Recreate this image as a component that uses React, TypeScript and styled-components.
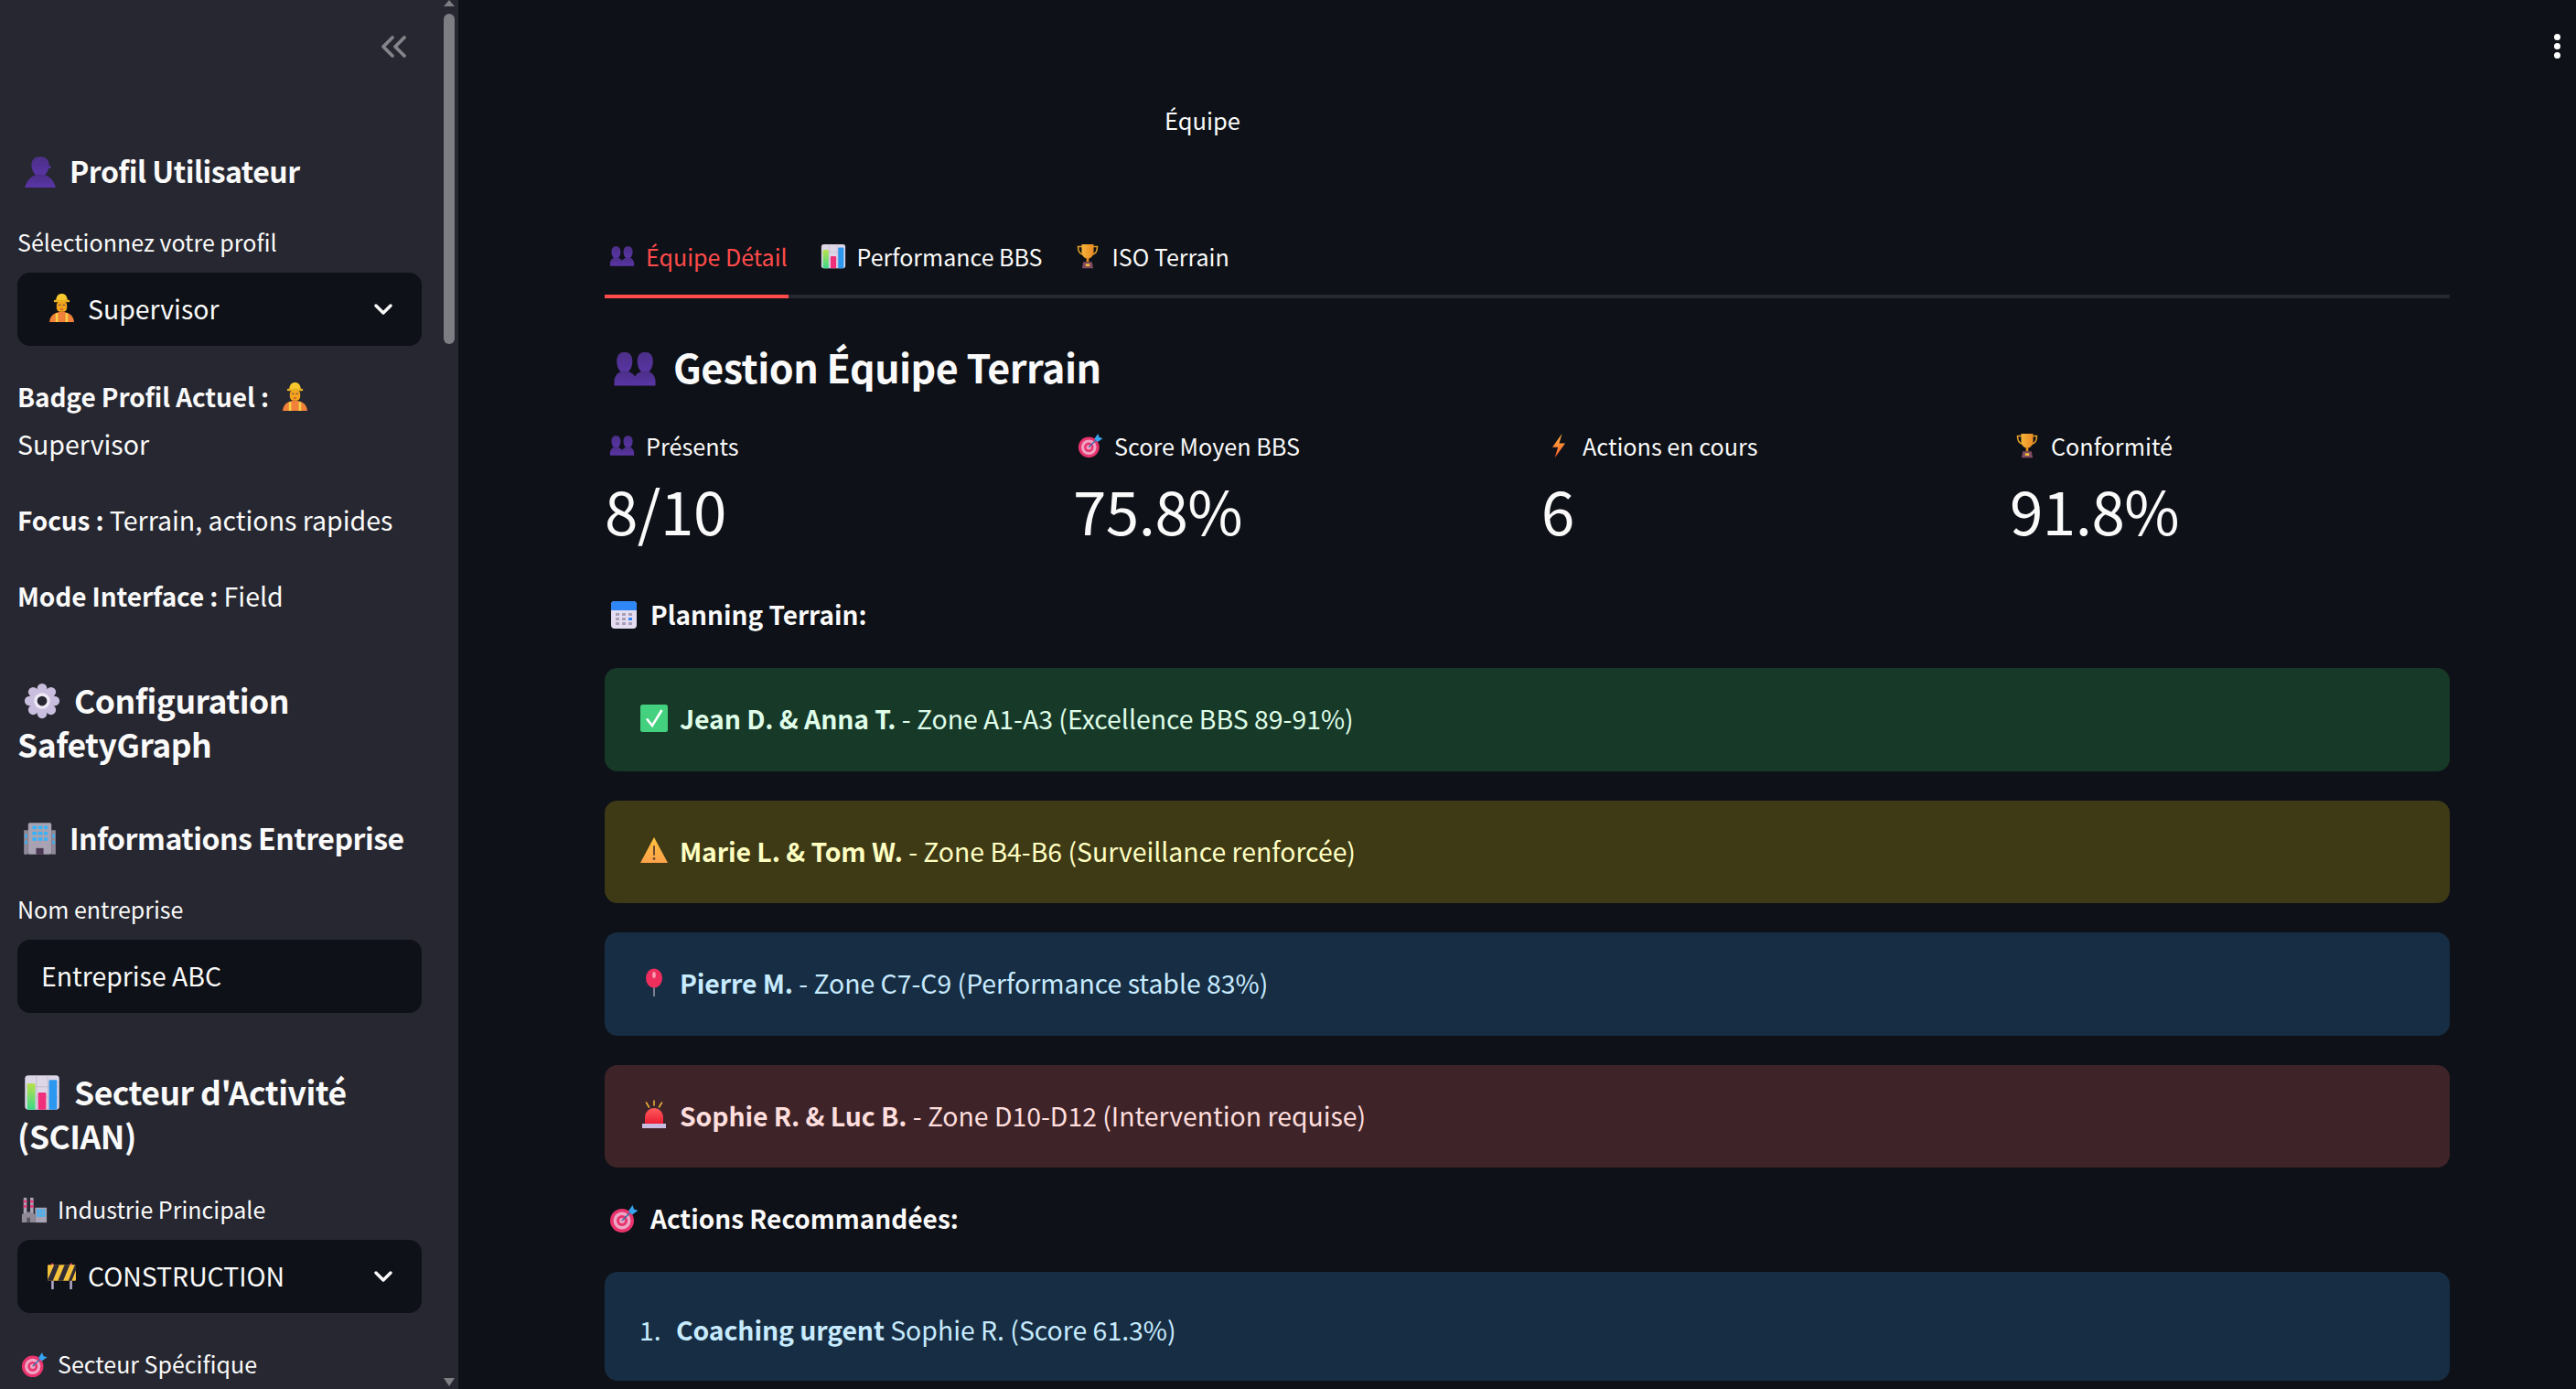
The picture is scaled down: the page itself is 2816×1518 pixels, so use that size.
import React from 'react'
import styled, { createGlobalStyle } from 'styled-components'

const GlobalStyle = createGlobalStyle`
  html, body {
    margin: 0;
    height: 100%;
    overflow: hidden;
    background: #0e1117;
  }
  body {
    font-family: "Noto Sans CJK SC", "Noto Sans", sans-serif;
    color: #fafafa;
  }
  * {
    box-sizing: border-box;
  }
`

type EmojiName =
  | 'person' | 'people' | 'worker' | 'gear' | 'office' | 'chart' | 'factory' | 'barrier'
  | 'target' | 'trophy' | 'zap' | 'calendar' | 'check' | 'warning' | 'pin' | 'siren'

const shapes: Record<EmojiName, React.ReactNode> = {
  person: (
    <g fill="url(#purple)">
      <path d="M7.500 9c0-5 3-8 8.500-8s8.500 3 8.500 8c0 6-3.500 11-8.500 11S7.500 15 7.500 9z" />
      <circle cx="25" cy="11" r="1.500" />
      <path d="M16 18c-7 0-13 5-15 13h30c-2-8-8-13-15-13z" />
    </g>
  ),
  people: (
    <g fill="url(#purple)">
      <path d="M2.800 10.500C2.800 6 5 3.800 8.500 3.800s5.700 2.200 5.700 6.700-2.200 8.500-5.700 8.500-5.700-4-5.700-8.500z" />
      <path d="M17.800 10.500c0-4.500 2.200-6.700 5.700-6.700s5.700 2.200 5.700 6.700-2.200 8.500-5.700 8.500-5.700-4-5.700-8.500z" />
      <path d="M8.500 17.500c-4 0-7 3-7.500 7v3.800h15.500l.5-3.800c-.5-4-4.500-7-8.500-7z" />
      <path d="M23.500 17.500c-4 0-8 3-8.500 7l.5 3.800H31v-3.800c-.5-4-3.500-7-7.500-7z" />
    </g>
  ),
  worker: (
    <>
      <path d="M3 31c0-6 5-11 13-11s13 5 13 11z" fill="#f0803a" />
      <path d="M9.500 21.500H12V31H9.500zM20 21.500h2.500V31H20z" fill="#f6d044" />
      <rect x="10.500" y="9" width="11" height="11" rx="4" fill="#f5a31c" />
      <path d="M12.500 13H15M17 13h2.500" stroke="#7a5a50" strokeWidth="1.300" />
      <path d="M14.500 17.500h3" stroke="#b03a3a" strokeWidth="1" />
      <path d="M10 8c0-4.500 2.500-7 6-7s6 2.500 6 7z" fill="#f7c92e" />
      <rect x="7.500" y="7.500" width="17" height="2.400" rx="1.200" fill="#e9b020" />
    </>
  ),
  gear: (
    <>
      <g fill="#c9bedd">
        <circle cx="16" cy="5" r="4.300" />
        <circle cx="16" cy="27" r="4.300" />
        <circle cx="5" cy="16" r="4.300" />
        <circle cx="27" cy="16" r="4.300" />
        <circle cx="8.200" cy="8.200" r="4.300" />
        <circle cx="23.800" cy="8.200" r="4.300" />
        <circle cx="8.200" cy="23.800" r="4.300" />
        <circle cx="23.800" cy="23.800" r="4.300" />
        <circle cx="16" cy="16" r="11" />
      </g>
      <circle cx="16" cy="16" r="7" fill="#efeaf5" />
      <circle cx="16" cy="16" r="4.300" fill="#262730" />
    </>
  ),
  office: (
    <>
      <path d="M1 8h4v23H1zM27 8h4v23h-4z" fill="#8f8a9a" />
      <rect x="5" y="1" width="22" height="30" rx="1.500" fill="#a8a2b2" />
      <g fill="#35b4fb">
        <rect x="9" y="4" width="4" height="3" />
        <rect x="14.500" y="4" width="4" height="3" />
        <rect x="20" y="4" width="3.500" height="3" />
        <rect x="9" y="9.500" width="4" height="3" />
        <rect x="14.500" y="9.500" width="4" height="3" />
        <rect x="20" y="9.500" width="3.500" height="3" />
        <rect x="9" y="15" width="4" height="3" />
        <rect x="14.500" y="15" width="4" height="3" />
        <rect x="20" y="15" width="3.500" height="3" />
        <rect x="2" y="12" width="2" height="3" />
        <rect x="2" y="18" width="2" height="3" />
        <rect x="28" y="12" width="2" height="3" />
        <rect x="28" y="18" width="2" height="3" />
      </g>
      <rect x="12.500" y="25" width="7" height="6" fill="#4b3a55" />
    </>
  ),
  chart: (
    <>
      <rect x="1" y="1" width="30" height="30" rx="3" fill="#dcd6e6" />
      <path d="M1 11h30M1 20h30M11 1v30M21 1v30" stroke="#c4bdd2" strokeWidth=".8" />
      <rect x="3" y="8" width="7" height="23" rx="1" fill="url(#lime)" />
      <rect x="12.500" y="16" width="7" height="15" rx="1" fill="#ef2f7c" />
      <rect x="22" y="5" width="7" height="26" rx="1" fill="#2c97ee" />
    </>
  ),
  factory: (
    <>
      <rect x="3" y="1" width="4" height="20" fill="#a8a2b2" />
      <rect x="11" y="1" width="4" height="20" fill="#a8a2b2" />
      <path d="M3 4h4v3H3zM11 4h4v3h-4zM3 10h4v3H3zM11 10h4v3h-4z" fill="#ea3a7a" />
      <path d="M1 31V21l8-3 8 3v10z" fill="#8f8a96" />
      <rect x="17" y="13" width="14" height="18" fill="#a8a2b2" />
      <rect x="19" y="15" width="10" height="9" fill="#35b4fb" />
      <path d="M19 18h10M19 21h10M22.300 15v9M25.700 15v9" stroke="#a8a2b2" strokeWidth=".7" />
      <rect x="7" y="25" width="4" height="6" fill="#59545f" />
    </>
  ),
  barrier: (
    <>
      <path d="M5 22h2.500v9H5zM24.500 22H27v9h-2.500z" fill="#b3a8c8" />
      <circle cx="6" cy="4.500" r="1.200" fill="#ea3a7a" />
      <circle cx="26" cy="4.500" r="1.200" fill="#ea3a7a" />
      <rect x="1" y="5" width="30" height="17" rx="1" fill="#f6c23c" />
      <path d="M8 5h5.500l-7 17H1v-1zM19 5h5.500l-7 17H12zM30 5h1v6l-4.500 11H23z" fill="#2f2a35" />
    </>
  ),
  target: (
    <>
      <circle cx="14" cy="18" r="13" fill="#e8336d" />
      <circle cx="14" cy="18" r="9.500" fill="#efa5c4" />
      <circle cx="14" cy="18" r="6" fill="#e8336d" />
      <circle cx="14" cy="18" r="3" fill="#efa5c4" />
      <path d="M14 18 26 6" stroke="#3a6ea8" strokeWidth="1.600" />
      <path d="M21 7.500 25.500 1 27 5.500 31.500 7 25 11.500z" fill="#36a4ee" />
    </>
  ),
  trophy: (
    <>
      <path d="M9 4H4c0 6 2 9 6 10M23 4h5c0 6-2 9-6 10" fill="none" stroke="#e7a127" strokeWidth="1.800" />
      <path d="M8.500 1h15v9c0 5-3 9-7.500 9s-7.500-4-7.500-9z" fill="url(#gold)" />
      <rect x="14.500" y="18" width="3" height="5" fill="#e58e1f" />
      <path d="M10.500 23h11l1.500 8H9z" fill="#7f4b61" />
      <rect x="13.500" y="25.500" width="5" height="3" fill="#f4c03c" />
    </>
  ),
  zap: <path d="M20 1 8 18h7l-4 13 13-18h-7.500z" fill="url(#bolt)" />,
  calendar: (
    <>
      <rect x="2" y="1" width="28" height="30" rx="4" fill="#e4dcf0" />
      <path d="M2 11V5a4 4 0 0 1 4-4h20a4 4 0 0 1 4 4v6z" fill="#2f86f6" />
      <g fill="#a9a1b8">
        <rect x="7" y="14" width="4" height="3" />
        <rect x="14" y="14" width="4" height="3" />
        <rect x="21" y="14" width="4" height="3" />
        <rect x="7" y="19" width="4" height="3" />
        <rect x="14" y="19" width="4" height="3" />
        <rect x="7" y="24" width="4" height="3" />
        <rect x="14" y="24" width="4" height="3" />
        <rect x="21" y="24" width="4" height="3" />
      </g>
      <rect x="21" y="19" width="4" height="3" fill="#2f86f6" />
    </>
  ),
  check: (
    <>
      <rect x="1" y="1" width="30" height="30" rx="2.500" fill="#43d17f" />
      <path d="M8 16.500 14 24 24.500 7" fill="none" stroke="#fff" strokeWidth="2.600" />
    </>
  ),
  warning: (
    <>
      <path d="M16 2 31 30H1z" fill="url(#amber)" />
      <rect x="15" y="11" width="2" height="11" rx="1" fill="#6a4a33" />
      <circle cx="16" cy="25.500" r="1.400" fill="#6a4a33" />
    </>
  ),
  pin: (
    <>
      <path d="M16 18v13" stroke="#a8a2b2" strokeWidth="1.400" />
      <ellipse cx="16" cy="11" rx="9" ry="10.500" fill="#ee2f5e" />
      <ellipse cx="16" cy="7.500" rx="1.800" ry="3.500" fill="#ff9db5" />
    </>
  ),
  siren: (
    <>
      <path d="M16 1v5M7.500 3l3 5M24.500 3l-3 5" stroke="#f1b43a" strokeWidth="1.500" strokeLinecap="round" />
      <path d="M6 27v-8c0-5.500 4.500-10 10-10s10 4.500 10 10v8z" fill="url(#red)" />
      <rect x="3" y="26" width="26" height="5" fill="#c8bde0" />
    </>
  ),
}

const Glyph = styled.svg<{ $size: number; $gap: number; $lead: number }>`
  display: inline-block;
  flex: none;
  width: ${(p) => p.$size}px;
  height: ${(p) => p.$size}px;
  margin: 0 ${(p) => p.$gap}px 0 ${(p) => p.$lead}px;
  vertical-align: ${(p) => -Math.round(p.$size * 0.16)}px;
`

const Emoji = ({ name, size, gap = 12, lead = 0 }: { name: EmojiName; size: number; gap?: number; lead?: number }) => (
  <Glyph $size={size} $gap={gap} $lead={lead} viewBox="0 0 32 32" aria-hidden="true">
    {shapes[name]}
  </Glyph>
)

const GradientDefs = styled.svg`
  display: block;
  width: 0;
  height: 0;
`

const Page = styled.div`
  display: flex;
  width: 100%;
  height: 100vh;
  overflow: hidden;
  background: #0e1117;
`

const Sidebar = styled.aside`
  position: relative;
  flex: none;
  width: 501px;
  height: 100%;
  padding: 38px 40px 0 19px;
  overflow: hidden;
  background: #262730;
`

const ScrollThumb = styled.div`
  position: absolute;
  top: 15px;
  left: 485px;
  width: 12px;
  height: 361px;
  border-radius: 6px;
  background: #7d7d84;
`

const ScrollArrow = styled.div<{ $down?: boolean }>`
  position: absolute;
  left: 485px;
  width: 0;
  height: 0;
  border-left: 6px solid transparent;
  border-right: 6px solid transparent;
  ${(p) =>
    p.$down
      ? 'bottom: 3px; border-top: 9px solid #7d7d84;'
      : 'top: 0; border-bottom: 7px solid #7d7d84;'}
`

const CollapseRow = styled.div`
  display: flex;
  justify-content: flex-end;
  height: 124px;
  svg {
    display: block;
    width: 30px;
    height: 26px;
    margin-right: 16px;
  }
`

const SectionTitle = styled.h3<{ $top?: number }>`
  margin: ${(p) => p.$top ?? 0}px 0 0;
  padding-bottom: 2px;
  font-size: 32px;
  font-weight: 600;
  line-height: 48px;
  letter-spacing: -0.5px;
`

const LargeTitle = styled(SectionTitle)`
  font-size: 35.500px;
`

const FieldLabel = styled.label<{ $top: number }>`
  display: block;
  margin-top: ${(p) => p.$top}px;
  padding: 0 0 2px;
  font-size: 25px;
  line-height: 34px;
`

const Field = styled.div`
  display: flex;
  align-items: center;
  height: 80px;
  margin-top: 15px;
  padding: 0 32px 3px 26px;
  border-radius: 14px;
  background: #0e1117;
  font-size: 28.400px;
`

const SelectValue = styled.span`
  display: flex;
  flex: 1;
  align-items: center;
  padding-left: 6px;
`

const Chevron = styled.svg`
  flex: none;
  width: 20px;
  height: 12px;
  margin-top: 3px;
`

const InfoLine = styled.p<{ $top: number }>`
  margin: ${(p) => p.$top}px 0 0;
  padding: 0 0 2px;
  font-size: 28.500px;
  line-height: 52px;
  strong {
    font-weight: 600;
    font-size: 28px;
    letter-spacing: -0.1px;
  }
`

const Main = styled.main`
  flex: 1;
  min-width: 0;
  padding: 111px 138px 0 160px;
`

const Caption = styled.div`
  padding: 0 0 2px 612px;
  font-size: 25.500px;
  line-height: 40px;
`

const TabBar = styled.div`
  display: flex;
  gap: 30px;
  height: 84px;
  margin-top: 89px;
  box-shadow: inset 0 -4px 0 #262730;
`

const Tab = styled.div<{ $active?: boolean }>`
  display: flex;
  align-items: center;
  height: 84px;
  padding: 0 1px 4px 5px;
  border-bottom: 4px solid ${(p) => (p.$active ? '#ff4b4b' : 'transparent')};
  color: ${(p) => (p.$active ? '#ff4b4b' : '#fafafa')};
  font-size: 25px;
`

const PageTitle = styled.h2`
  margin: 44px 0 0;
  padding: 0 0 3px 9px;
  font-size: 43px;
  font-weight: 600;
  line-height: 60px;
  letter-spacing: -0.5px;
`

const MetricRow = styled.div`
  display: grid;
  grid-template-columns: repeat(4, 1fr);
  column-gap: 31px;
  margin-top: 36px;
`

const MetricLabel = styled.div`
  display: flex;
  align-items: center;
  padding: 0 0 2px 5px;
  font-size: 25.200px;
  line-height: 36px;
`

const MetricValue = styled.div`
  margin-top: 10px;
  padding-bottom: 3px;
  font-size: 65.500px;
  line-height: 80px;
  letter-spacing: -0.5px;
`

const SubTitle = styled.p<{ $top: number }>`
  margin: ${(p) => p.$top}px 0 0;
  padding: 0 0 2px 5px;
  font-size: 28px;
  font-weight: 600;
  line-height: 40px;
`

const alertTones = {
  success: { bg: '#173928', fg: '#dffde9' },
  warning: { bg: '#3e3a16', fg: '#ffffc2' },
  info: { bg: '#172d43', fg: '#c7ebff' },
  error: { bg: '#3e2428', fg: '#ffdede' },
}

const AlertStack = styled.div`
  display: flex;
  flex-direction: column;
  gap: 32px;
  margin-top: 37px;
`

const Alert = styled.div<{ $tone: keyof typeof alertTones; $height?: number }>`
  display: flex;
  align-items: center;
  height: ${(p) => p.$height ?? 112.5}px;
  padding: 0 38px 3px;
  border-radius: 14px;
  background: ${(p) => alertTones[p.$tone].bg};
  color: ${(p) => alertTones[p.$tone].fg};
  font-size: 28.400px;
  white-space: pre-wrap;
  strong {
    font-weight: 600;
    letter-spacing: -0.1px;
  }
`

const OrderedText = styled.span`
  padding-top: 8px;
`

const ListNumber = styled.span`
  display: inline-block;
  width: 40px;
`

const MenuDots = styled.div`
  position: absolute;
  top: 37px;
  right: 17px;
  display: flex;
  flex-direction: column;
  gap: 3px;
  i {
    display: block;
    width: 7px;
    height: 7px;
    border-radius: 50%;
    background: #fff;
  }
`

const Select = ({ icon, label }: { icon: EmojiName; label: string }) => (
  <Field>
    <SelectValue>
      <Emoji name={icon} size={33} gap={12} />
      {label}
    </SelectValue>
    <Chevron viewBox="0 0 20 12">
      <path d="M2 2l8 8 8-8" fill="none" stroke="#fafafa" strokeWidth="3.400" strokeLinecap="round" strokeLinejoin="round" />
    </Chevron>
  </Field>
)

const metrics: { icon: EmojiName; label: string; value: string }[] = [
  { icon: 'people', label: 'Présents', value: '8/10' },
  { icon: 'target', label: 'Score Moyen BBS', value: '75.8%' },
  { icon: 'zap', label: 'Actions en cours', value: '6' },
  { icon: 'trophy', label: 'Conformité', value: '91.8%' },
]

const planning: { tone: keyof typeof alertTones; icon: EmojiName; who: string; rest: string }[] = [
  { tone: 'success', icon: 'check', who: 'Jean D. & Anna T.', rest: ' - Zone A1-A3 (Excellence BBS 89-91%)' },
  { tone: 'warning', icon: 'warning', who: 'Marie L. & Tom W.', rest: ' - Zone B4-B6 (Surveillance renforcée)' },
  { tone: 'info', icon: 'pin', who: 'Pierre M.', rest: ' - Zone C7-C9 (Performance stable 83%)' },
  { tone: 'error', icon: 'siren', who: 'Sophie R. & Luc B.', rest: ' - Zone D10-D12 (Intervention requise)' },
]

const App: React.FC = () => (
  <>
    <GlobalStyle />
    <GradientDefs aria-hidden="true">
      <defs>
        <linearGradient id="purple" x1="0" y1="0" x2="0" y2="1">
          <stop offset="0" stopColor="#4b2f86" />
          <stop offset="1" stopColor="#5a35a6" />
        </linearGradient>
        <linearGradient id="lime" x1="0" y1="0" x2="0" y2="1">
          <stop offset="0" stopColor="#b9e04a" />
          <stop offset="1" stopColor="#3cd98a" />
        </linearGradient>
        <linearGradient id="gold" x1="0" y1="0" x2="1" y2="0">
          <stop offset="0" stopColor="#f6b53a" />
          <stop offset="1" stopColor="#ea8a24" />
        </linearGradient>
        <linearGradient id="bolt" x1="0" y1="0" x2="0" y2="1">
          <stop offset="0" stopColor="#ffb648" />
          <stop offset="1" stopColor="#ff5a24" />
        </linearGradient>
        <linearGradient id="amber" x1="0" y1="0" x2="0" y2="1">
          <stop offset="0" stopColor="#ffc23e" />
          <stop offset="1" stopColor="#ffa24a" />
        </linearGradient>
        <linearGradient id="red" x1="0" y1="0" x2="0" y2="1">
          <stop offset="0" stopColor="#ff5a5a" />
          <stop offset="1" stopColor="#ea1c34" />
        </linearGradient>
      </defs>
    </GradientDefs>
    <Page>
      <Sidebar>
        <ScrollArrow />
        <ScrollThumb />
        <ScrollArrow $down />
        <CollapseRow>
          <svg viewBox="0 0 30 26">
            <path
              d="M14 3 4 13l10 10M27 3 17 13l10 10"
              fill="none"
              stroke="#84848b"
              strokeWidth="3.800"
              strokeLinecap="round"
              strokeLinejoin="round"
            />
          </svg>
        </CollapseRow>

        <SectionTitle>
          <Emoji name="person" size={36} lead={7} gap={14} />
          Profil Utilisateur
        </SectionTitle>
        <FieldLabel $top={35}>Sélectionnez votre profil</FieldLabel>
        <Select icon="worker" label="Supervisor" />

        <InfoLine $top={29}>
          <strong>Badge Profil Actuel : </strong>
          <Emoji name="worker" size={33} lead={6} gap={0} />
          <br />
          Supervisor
        </InfoLine>
        <InfoLine $top={29}>
          <strong>Focus : </strong>Terrain, actions rapides
        </InfoLine>
        <InfoLine $top={29}>
          <strong>Mode Interface : </strong>Field
        </InfoLine>

        <LargeTitle $top={62}>
          <Emoji name="gear" size={40} lead={7} gap={15} />
          Configuration SafetyGraph
        </LargeTitle>
        <SectionTitle $top={52}>
          <Emoji name="office" size={37} lead={6} gap={14} />
          Informations Entreprise
        </SectionTitle>
        <FieldLabel $top={35}>Nom entreprise</FieldLabel>
        <Field>Entreprise ABC</Field>

        <LargeTitle $top={62}>
          <Emoji name="chart" size={40} lead={7} gap={15} />
          Secteur d'Activité (SCIAN)
        </LargeTitle>
        <FieldLabel $top={37}>
          <Emoji name="factory" size={29} lead={4} gap={11} />
          Industrie Principale
        </FieldLabel>
        <Select icon="barrier" label="CONSTRUCTION" />
        <FieldLabel $top={38}>
          <Emoji name="target" size={29} lead={4} gap={11} />
          Secteur Spécifique
        </FieldLabel>
      </Sidebar>

      <Main>
        <MenuDots>
          <i />
          <i />
          <i />
        </MenuDots>
        <Caption>Équipe</Caption>

        <TabBar>
          <Tab $active>
            <Emoji name="people" size={28} />
            Équipe Détail
          </Tab>
          <Tab>
            <Emoji name="chart" size={28} />
            Performance BBS
          </Tab>
          <Tab>
            <Emoji name="trophy" size={28} />
            ISO Terrain
          </Tab>
        </TabBar>

        <PageTitle>
          <Emoji name="people" size={48} gap={18} />
          Gestion Équipe Terrain
        </PageTitle>

        <MetricRow>
          {metrics.map((m) => (
            <div key={m.label}>
              <MetricLabel>
                <Emoji name={m.icon} size={28} />
                {m.label}
              </MetricLabel>
              <MetricValue>{m.value}</MetricValue>
            </div>
          ))}
        </MetricRow>

        <SubTitle $top={51}>
          <Emoji name="calendar" size={32} gap={13} />
          Planning Terrain:
        </SubTitle>

        <AlertStack>
          {planning.map((row) => (
            <Alert key={row.who} $tone={row.tone}>
              <Emoji name={row.icon} size={32} gap={12} />
              <span>
                <strong>{row.who}</strong>
                {row.rest}
              </span>
            </Alert>
          ))}
        </AlertStack>

        <SubTitle $top={35}>
          <Emoji name="target" size={32} gap={13} />
          Actions Recommandées:
        </SubTitle>

        <AlertStack>
          <Alert $tone="info" $height={119}>
            <OrderedText>
              <ListNumber>1.</ListNumber>
              <strong>Coaching urgent</strong> Sophie R. (Score 61.3%)
            </OrderedText>
          </Alert>
        </AlertStack>
      </Main>
    </Page>
  </>
)

export default App
